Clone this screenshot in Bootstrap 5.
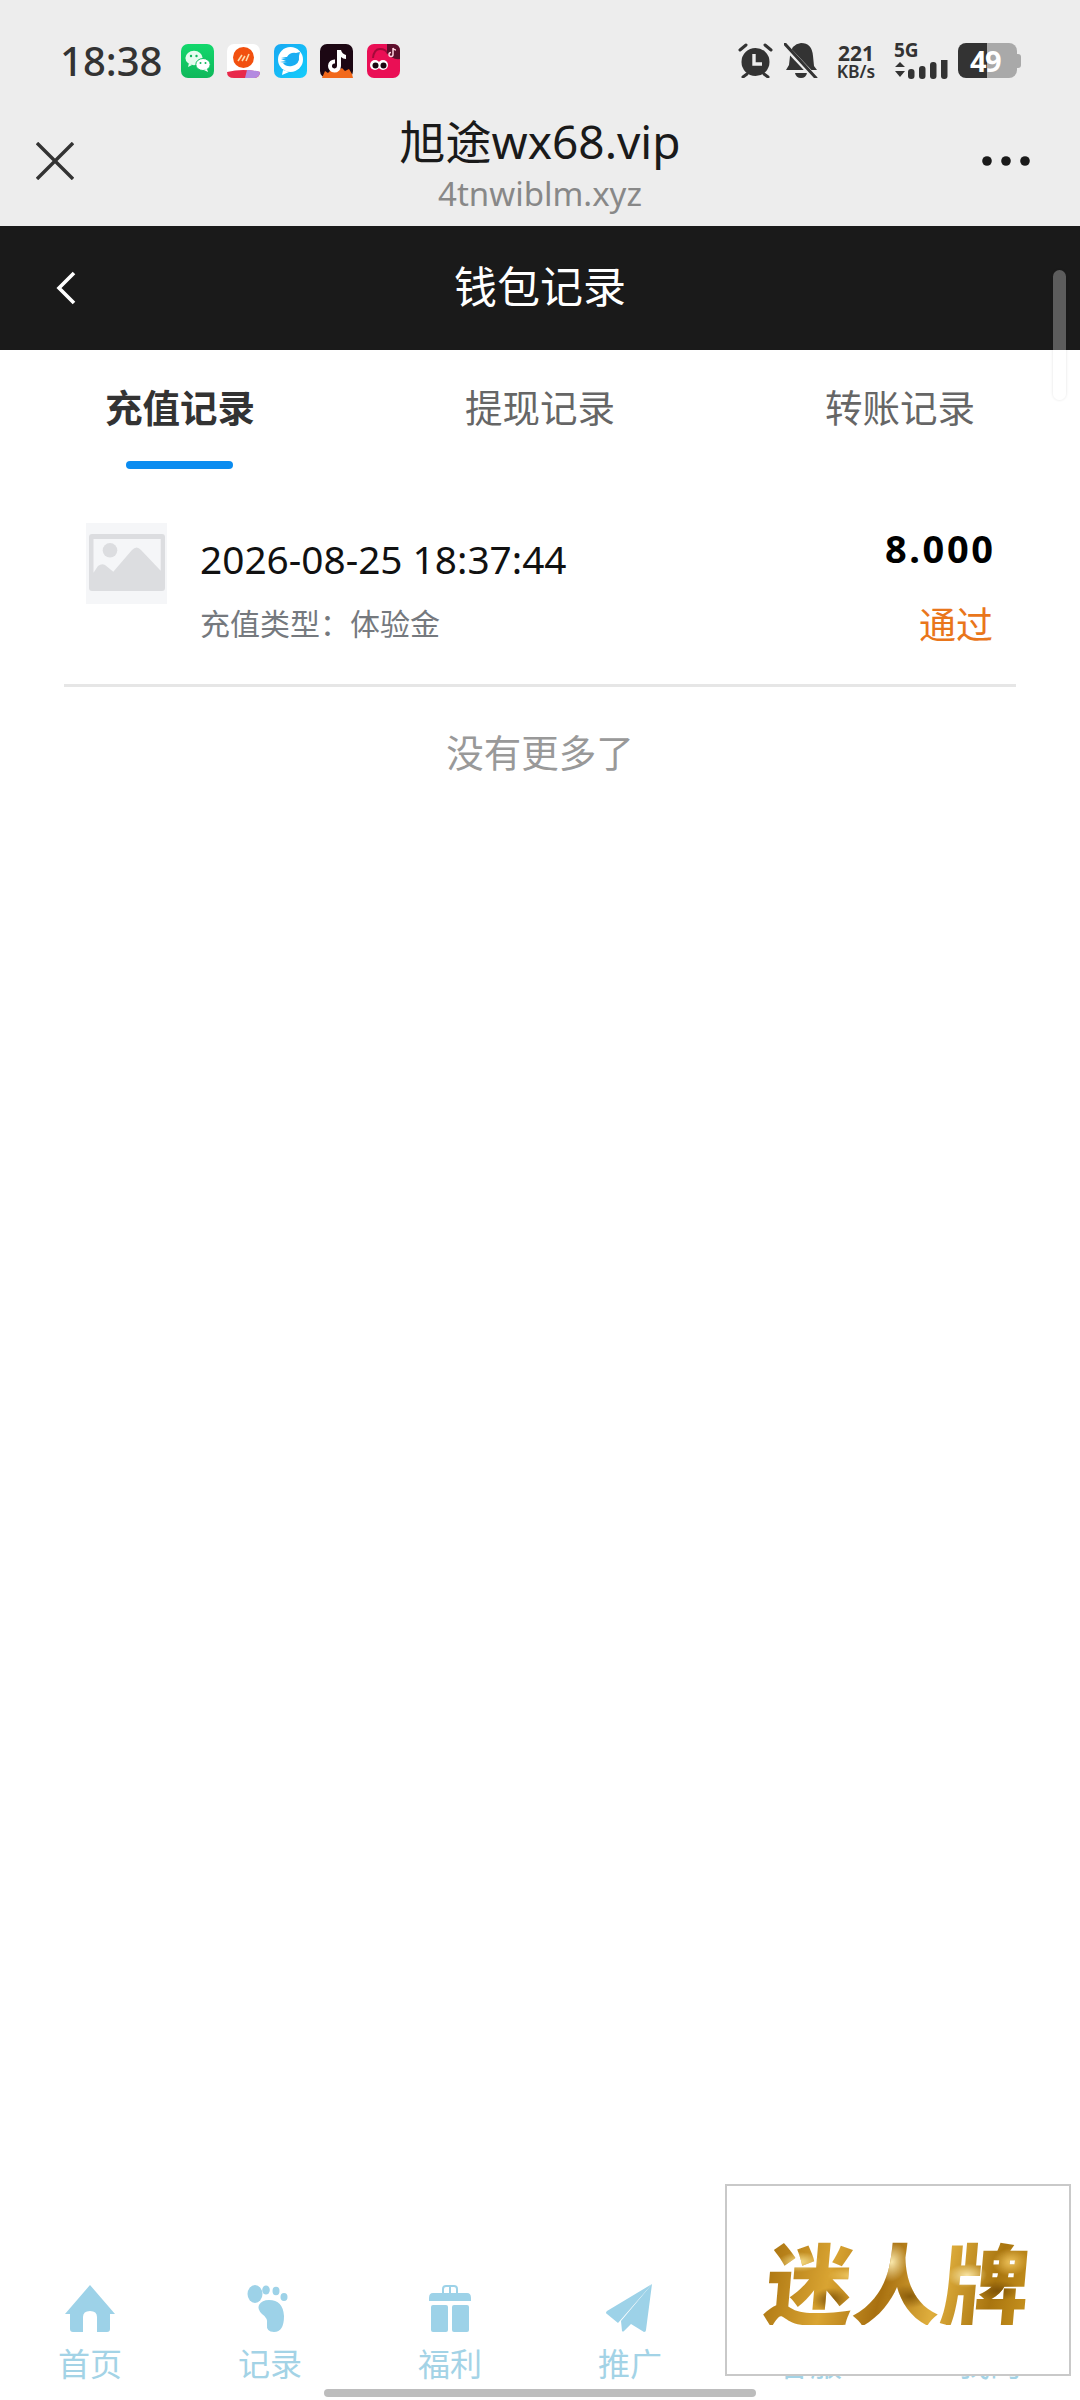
<!doctype html>
<html lang="zh-CN">
<head>
<meta charset="utf-8">
<title>钱包记录</title>
<link href="https://cdn.jsdelivr.net/npm/bootstrap@5.3.0/dist/css/bootstrap.min.css" rel="stylesheet">
<style>
html,body{height:2400px}
body{width:1080px;font-family:"Noto Sans","Noto Sans CJK SC",sans-serif;background:#fff;overflow:hidden}
.chrome{height:226px;background:#ededed;padding-top:43px}
.sbar{height:35px;padding:0 60px;color:#333}
.clock{font-size:40px;font-weight:500;line-height:35px;margin-right:17px;width:104px}
.appicons{gap:13.4px}
.appicons svg{width:33px;height:34px;display:block}
.sright{height:35px;margin-right:-1px}
.bellicon{margin-left:10px}
.net{font-weight:700;color:#333;line-height:1;text-align:center;width:44px;margin:0 16px 0 16px}
.net b{display:block;font-size:21px;line-height:21px;font-weight:700}
.net span{display:block;font-size:17.5px;line-height:15px;font-weight:600}
.fiveg{width:54px;margin-right:10px;height:35px}
.fiveg b{font-size:19px;line-height:16px;display:block;margin-top:-1px}
.fiveg svg{margin-top:2px}
.batt{width:59px;height:35px;border-radius:8px;background:linear-gradient(90deg,#333 29px,#a9a9a9 29px);color:#fff;font-weight:700;font-size:29px;line-height:35px;padding-left:12px;letter-spacing:-1.5px}
.nub{width:4px;height:14px;background:#a9a9a9;border-radius:0 3px 3px 0}
.urlrow{padding:32px 50px 0 36px;height:148px}
.urltitle{font-size:46px;line-height:62px;color:#1a1a1a}
.urlsub{font-size:33px;line-height:40px;color:#888;margin-top:2px}
.urlleft{width:62px;padding-top:32px}
.urlright{width:48px;padding-top:46px}
.topbar{height:124px;background:#1a1a1a;color:#fff;padding:0 55px;position:relative}
.topbar h1{font-size:43px;font-weight:400;margin:-3px 0 0;line-height:1;flex:1;text-align:center;padding-right:22px}
.track{position:absolute;left:1053px;top:270px;width:13px;height:130px;border-radius:7px;background:linear-gradient(#5c5c5c 0 80px,#fff 80px);box-shadow:0 0 3px rgba(0,0,0,.12)}
.tablink{font-size:37.5px;color:#666;line-height:1;height:119px;display:flex;justify-content:center;position:relative;padding-top:39px}
.tablink.on{color:#333;font-weight:700}
.tablink.on::after{content:"";position:absolute;left:126px;width:107px;top:111px;height:8px;border-radius:4px;background:#0a8cf0}
.rec{margin:0 64px;padding:54px 23px 0 22px;height:218px;border-bottom:3px solid #e6e6e6}
.thumb{width:81px;height:81px;margin-right:33px;background:#f5f6f8;flex:none}
.stamp{font-size:38.8px;line-height:50px;color:#111;margin-top:11px}
.kind{font-size:30px;line-height:40px;color:#75797e;margin-top:20px}
.amount{font-size:38px;font-weight:700;color:#000;line-height:50px;letter-spacing:2.6px;margin-right:-2.6px}
.state{font-size:37px;line-height:50px;color:#e9761b;margin-top:27px}
.nomore{font-size:37.5px;color:#999;text-align:center;line-height:50px;margin-top:41px}
.foot{margin-top:auto;padding-bottom:18px}
.navlabel{font-size:32px;line-height:36px;color:#a3d3e6;margin-top:14px}
.navglyph{height:48px;display:block;margin:0 auto;width:60px}
.overlaybox{position:absolute;left:725px;top:2184px;width:346px;height:192px;background:#fff;border:2px solid #c9c9c9}
.goldtxt{font-family:"Noto Sans CJK SC",sans-serif;font-weight:900;font-size:88px;line-height:90px;white-space:nowrap;transform:skewX(-5deg);
background:
radial-gradient(ellipse 22px 10px at 12% 30%,#f7e08d 0,transparent 100%),
radial-gradient(ellipse 18px 12px at 25% 72%,#7d5208 0,transparent 100%),
radial-gradient(ellipse 26px 9px at 33% 45%,#f4cf6a 0,transparent 100%),
radial-gradient(ellipse 16px 20px at 47% 30%,#fbeaae 0,transparent 100%),
radial-gradient(ellipse 22px 12px at 55% 68%,#8a5c0a 0,transparent 100%),
radial-gradient(ellipse 14px 22px at 62% 55%,#fae29a 0,transparent 100%),
radial-gradient(ellipse 20px 12px at 76% 45%,#f9e6a6 0,transparent 100%),
radial-gradient(ellipse 22px 10px at 88% 62%,#7e5308 0,transparent 100%),
radial-gradient(ellipse 18px 14px at 92% 30%,#eec25a 0,transparent 100%),
linear-gradient(100deg,#a9720f,#d9a432 25%,#a87010 45%,#dfae3d 65%,#a9750f 85%,#c8931f);
-webkit-background-clip:text;background-clip:text;color:transparent}
.homebar{position:absolute;left:324px;top:2389px;width:432px;height:8px;border-radius:4px;background:#bdbdbd}
</style>
</head>
<body class="d-flex flex-column">
<div class="chrome">
  <div class="sbar d-flex align-items-center justify-content-between">
    <div class="d-flex align-items-center">
      <div class="clock">18:38</div>
      <div class="appicons d-flex">
        <svg viewBox="0 0 33 34"><defs><linearGradient id="wg" x1="0" y1="0" x2="0" y2="1"><stop offset="0" stop-color="#12d86c"/><stop offset="1" stop-color="#0fb85b"/></linearGradient></defs><rect width="33" height="34" rx="7" fill="url(#wg)"/><ellipse cx="13" cy="14" rx="8.6" ry="7.2" fill="#e6fbee"/><path d="M8 19l-1 4 4-2z" fill="#e6fbee"/><ellipse cx="22" cy="20.500" rx="7.200" ry="6" fill="#fff" stroke="#10c262"/><path d="M26 25l1 3-4-2z" fill="#fff"/><circle cx="10" cy="12" r="1.200" fill="#10b85c"/><circle cx="15.500" cy="12" r="1.200" fill="#10b85c"/><circle cx="19.500" cy="19" r="1" fill="#10b85c"/><circle cx="24.500" cy="19" r="1" fill="#10b85c"/></svg>
        <svg viewBox="0 0 33 34"><rect width="33" height="34" rx="7" fill="#fff"/><circle cx="16.500" cy="13.500" r="10.500" fill="#f2500f"/><path d="M11 17l4-6M15 17l3-5M19 17l3-7" stroke="#ffd9a8" stroke-width="1.600"/><path d="M0 28q16 -4 33 0q0 6-7 6H7q-7 0-7-6z" fill="#e8284a"/><path d="M20 26q7 0 13 2q0 6-7 6h-8z" fill="#b48ae0"/></svg>
        <svg viewBox="0 0 33 34"><defs><linearGradient id="bg" x1="0" y1="0" x2="1" y2="1"><stop offset="0" stop-color="#18a8f2"/><stop offset="1" stop-color="#14cdfb"/></linearGradient></defs><rect width="33" height="34" rx="7" fill="url(#bg)"/><circle cx="16.500" cy="15.500" r="12.500" fill="#fff"/><path d="M9 26l-1 5 7-3z" fill="#fff"/><path d="M7 13h6q3-5 9-4l4-1-1 4q1 8-7 10-6 1-9-3h4l-7-1 6-1-5-2 5-1z" fill="#1aaef2"/></svg>
        <svg viewBox="0 0 33 34"><rect width="33" height="34" rx="7" fill="#1c0713"/><path d="M2 34L5 27l3 2 4-4 5 2 5-3 3 3 4-2 3 5 1 4z" fill="#f2691b"/><path d="M17 6h4q1 4 5 5v4q-3 0-5-2v9a6.500 6.500 0 1 1-6-6.500v4a2.500 2.500 0 1 0 2 2.500z" fill="#fff"/></svg>
        <svg viewBox="0 0 33 34"><rect width="33" height="34" rx="7" fill="#ea0f55"/><path d="M6 14Q7 5 13 5t8 5" stroke="#a30a3a" stroke-width="2" fill="none"/><path d="M20 0h6q7 0 7 7v8q-8 1-13-6z" fill="#5c0f2c"/><path d="M26 4v6.500a2 2 0 1 1-2-2M26 4q1 2 3 2" stroke="#ffd3e0" stroke-width="1.500" fill="none"/><circle cx="8" cy="21" r="5" fill="#fff"/><circle cx="16" cy="21" r="5" fill="#fff"/><circle cx="8.500" cy="21.500" r="3" fill="#1a0710"/><circle cx="16.500" cy="21.500" r="3" fill="#1a0710"/></svg>
      </div>
    </div>
    <div class="sright d-flex align-items-center">
      <svg width="37" height="35" viewBox="0 0 37 35"><circle cx="18.500" cy="19" r="14" fill="#333"/><path d="M3 7l6-5M34 7l-6-5M6 34l4-3M31 34l-4-3" stroke="#333" stroke-width="3" stroke-linecap="round"/><path d="M17 11v10h8" stroke="#ededed" stroke-width="3.400" fill="none"/></svg>
      <svg class="bellicon" width="34" height="35" viewBox="0 0 34 35"><path d="M17 0q11 0 12 13l1 10 3 4H2l3-5 1-9Q7 1 17 0z" fill="#333"/><path d="M11 30h12q-1 5-6 5t-6-5z" fill="#333"/><path d="M-1 1L32 36" stroke="#ededed" stroke-width="5.500"/><path d="M1 1l31 34" stroke="#333" stroke-width="3" stroke-linecap="round"/></svg>
      <div class="net"><b>221</b><span>KB/s</span></div>
      <div class="fiveg"><b>5G</b>
        <svg width="54" height="19" viewBox="0 0 54 19" class="d-block"><path d="M1 7l5-5 5 5zM1 11l5 6 5-6z" fill="#333"/><rect x="14" y="9" width="6.500" height="10" rx="3" fill="#333"/><rect x="25" y="6" width="6.500" height="13" rx="3" fill="#333"/><rect x="36" y="2" width="6.500" height="17" rx="3" fill="#333"/><rect x="47" y="-3" width="6.500" height="22" rx="3" fill="#333"/></svg>
      </div>
      <div class="batt">49</div><div class="nub"></div>
    </div>
  </div>
  <div class="urlrow d-flex align-items-start justify-content-between">
    <div class="urlleft"><svg class="d-block" width="38" height="38" viewBox="0 0 38 38"><path d="M1 1l36 36M37 1L1 37" stroke="#333" stroke-width="3.400" fill="none"/></svg></div>
    <div class="text-center flex-grow-1">
      <div class="urltitle">旭途wx68.vip</div>
      <div class="urlsub">4tnwiblm.xyz</div>
    </div>
    <div class="urlright"><svg class="d-block" width="48" height="10" viewBox="0 0 48 10"><circle cx="5" cy="5" r="4.800" fill="#1a1a1a"/><circle cx="24" cy="5" r="4.800" fill="#1a1a1a"/><circle cx="43" cy="5" r="4.800" fill="#1a1a1a"/></svg></div>
  </div>
</div>
<nav class="topbar navbar flex-nowrap">
  <svg width="22" height="36" viewBox="0 0 22 36"><path d="M19 3L4 18l15 15" stroke="#fff" stroke-width="3.600" fill="none"/></svg>
  <h1>钱包记录</h1>
</nav>
<div class="track"></div>
<ul class="nav row g-0 m-0">
  <li class="col-4"><a class="tablink on text-decoration-none" href="#">充值记录</a></li>
  <li class="col-4"><a class="tablink text-decoration-none" href="#">提现记录</a></li>
  <li class="col-4"><a class="tablink text-decoration-none" href="#">转账记录</a></li>
</ul>
<div class="rec d-flex justify-content-between">
  <div class="d-flex">
    <svg class="thumb" viewBox="0 0 81 81"><rect x="3" y="11" width="76" height="57" rx="3" fill="#dcdde0"/><path d="M7.500 16H74.700V47.700L55 27Q50.700 22 46 27L27.300 48.700 19 42Q15.700 40 12 43L7.500 49.700Z" fill="#f5f6f8"/><circle cx="24" cy="27.300" r="7.300" fill="#dcdde0"/></svg>
    <div>
      <div class="stamp">2026-08-25 18:37:44</div>
      <div class="kind">充值类型：体验金</div>
    </div>
  </div>
  <div class="text-end">
    <div class="amount">8.000</div>
    <div class="state">通过</div>
  </div>
</div>
<div class="nomore">没有更多了</div>
<footer class="foot row g-0 text-center">
  <a class="col-2 text-decoration-none" href="#">
    <svg class="navglyph" viewBox="0 0 60 48"><path d="M30 1L55 30h-5v15q0 3-3 3H37V33q0-6-7-6t-7 6v15H13q-3 0-3-3V30H5z" fill="#9dd2e8"/></svg>
    <div class="navlabel">首页</div>
  </a>
  <a class="col-2 text-decoration-none" href="#">
    <svg class="navglyph" viewBox="0 0 60 48"><ellipse cx="15" cy="10" rx="7.500" ry="9" fill="#9dd2e8"/><ellipse cx="26" cy="6" rx="3.800" ry="4.500" fill="#9dd2e8"/><ellipse cx="36" cy="7" rx="3.500" ry="4.200" fill="#9dd2e8"/><ellipse cx="44" cy="13" rx="3.500" ry="4" fill="#9dd2e8"/><path d="M29 16q14 0 15 16 0 16-10 16-8 0-7-8 1-6-5-10-5-5-3-9 3-5 10-5z" fill="#9dd2e8"/></svg>
    <div class="navlabel">记录</div>
  </a>
  <a class="col-2 text-decoration-none" href="#">
    <svg class="navglyph" viewBox="0 0 60 48"><path d="M23 10V5q0-3 3-3h8q3 0 3 3v5" stroke="#9dd2e8" stroke-width="2" fill="none"/><path d="M30 3v7" stroke="#9dd2e8" stroke-width="2"/><path d="M9 14q0-5 4-5h34q4 0 4 5v3H9z" fill="#9dd2e8"/><rect x="11" y="21" width="17" height="27" rx="2" fill="#9dd2e8"/><rect x="32" y="21" width="17" height="27" rx="2" fill="#9dd2e8"/></svg>
    <div class="navlabel">福利</div>
  </a>
  <a class="col-2 text-decoration-none" href="#">
    <svg class="navglyph" viewBox="0 0 60 48"><path d="M52 0L7 27q-2 2 0 3l11 9z" fill="#9dd2e8"/><path d="M52 0L21 37l1 10q1 1 2 0l7-7 13 8q2 0 2-2z" fill="#9dd2e8"/></svg>
    <div class="navlabel">推广</div>
  </a>
  <a class="col-2 text-decoration-none" href="#"><span class="navglyph"></span><div class="navlabel">客服</div></a>
  <a class="col-2 text-decoration-none" href="#"><span class="navglyph"></span><div class="navlabel">我的</div></a>
</footer>
<div class="overlaybox d-flex align-items-center justify-content-center"><div class="goldtxt">迷人牌</div></div>
<div class="homebar"></div>
<script src="https://cdn.jsdelivr.net/npm/bootstrap@5.3.0/dist/js/bootstrap.bundle.min.js"></script>
</body>
</html>
